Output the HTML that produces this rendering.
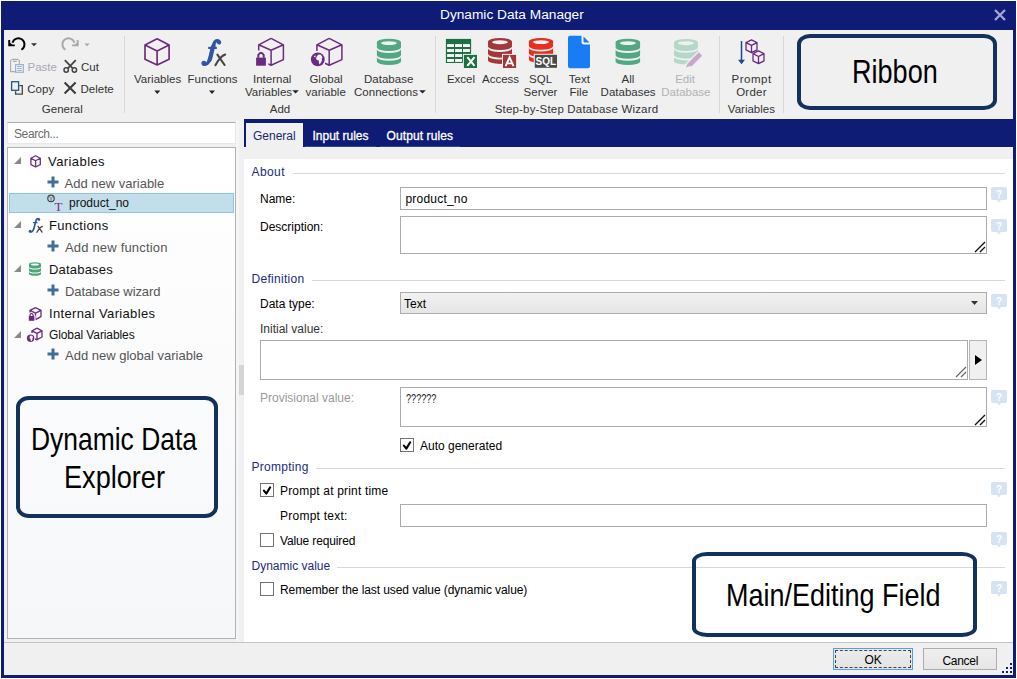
<!DOCTYPE html>
<html><head><meta charset="utf-8">
<style>
*{margin:0;padding:0;box-sizing:border-box}
html,body{width:1017px;height:679px;overflow:hidden;background:#fff;font-family:"Liberation Sans",sans-serif}
.a{position:absolute}
.t{position:absolute;white-space:pre;line-height:1;font-size:12px;color:#000}
.r{font-size:11.5px;color:#333}
.c{text-align:center}
.sec{color:#1c2a84}
.box{position:absolute;background:#fff;border:1px solid #ababab}
.sep{position:absolute;background:#dadada;width:1px}
.hl{position:absolute;height:1px;background:#d8d8d8}
.cb{position:absolute;width:14px;height:14px;border:1px solid #737373;background:#fff}
.help{position:absolute;width:16px;height:16px}
.ann{position:absolute;border:4px solid #12315d;border-radius:12px}
.annt{position:absolute;white-space:pre;line-height:1;color:#000;transform-origin:0 0}
</style></head><body>
<!-- window frame -->
<div class="a" style="left:1px;top:1px;width:1015px;height:677px;background:#0e1c75"></div>
<div class="a" style="left:4px;top:30px;width:1009px;height:645px;background:#f0f0f0"></div>
<div class="t" style="left:440px;top:8.4px;font-size:13.7px;color:#fff">Dynamic Data Manager</div>
<svg class="a" style="left:994px;top:9px" width="12" height="12" viewBox="0 0 12 12"><path d="M1 1L11 11M11 1L1 11" stroke="#a2a6d3" stroke-width="2.4"/></svg>

<!-- RIBBON -->
<div id="ribbon">
<svg class="a" style="left:0;top:30px" width="800" height="90" viewBox="0 30 800 90">
<path d="M12.5 42.8A6.1 6.1 0 1 1 21.45 49.7" stroke="#000" stroke-width="1.9" fill="none"/>
<path d="M9.2 39.9V45.4H14.8" stroke="#000" stroke-width="1.9" fill="none"/><path d="M9.3 42L9.3 45.3L12.8 45.3Z" fill="#000"/>
<path d="M31 43.3H37L34 46.3Z" fill="#333"/>
<path d="M74.4 42.8A6.1 6.1 0 1 0 65.45 49.7" stroke="#a8a8a8" stroke-width="1.9" fill="none"/>
<path d="M77.7 39.9V45.4H72.1" stroke="#a8a8a8" stroke-width="1.9" fill="none"/><path d="M77.6 42L77.6 45.3L74.1 45.3Z" fill="#a8a8a8"/>
<path d="M84.3 43.5H89.8L87 46.3Z" fill="#a8a8a8"/>
<path d="M12.3 59.4H17.8M12.2 59.6L10.6 60.6V71.6H15.2M17.8 59.6L19.4 60.6V64.2M13 61.4H16.8" stroke="#acacac" stroke-width="1.1" fill="none"/>
<rect x="15.6" y="64.6" width="7.8" height="7.7" fill="#f0f0f0" stroke="#9ab5d0" stroke-width="1.2"/><path d="M17.2 66.5H21.8M17.2 68.5H21.8M17.2 70.5H21.8" stroke="#9ab5d0" stroke-width="1"/>
<path d="M64.8 60.2L72.8 68.3M75.8 60.2L67.8 68.3" stroke="#444" stroke-width="1.8"/><circle cx="66.2" cy="70" r="2.2" stroke="#444" stroke-width="1.5" fill="none"/><circle cx="74.4" cy="70" r="2.2" stroke="#444" stroke-width="1.5" fill="none"/>
<rect x="11.6" y="81.7" width="7" height="8.6" fill="none" stroke="#1f5a8f" stroke-width="1.3"/><path d="M19.3 85.7H22.3V94.2H15.6V91.2" stroke="#444" stroke-width="1.3" fill="none"/>
<path d="M64.6 82.6L75.6 93.4M75.6 82.6L64.6 93.4" stroke="#3c3c3c" stroke-width="2.1"/>
<path d="M124.5 36V113" stroke="#d8d8d8" stroke-width="1"/>
<path d="M435.5 36V113" stroke="#d8d8d8" stroke-width="1"/>
<path d="M719.5 36V113" stroke="#d8d8d8" stroke-width="1"/>
<path d="M783.5 36V113" stroke="#d8d8d8" stroke-width="1"/>
<path d="M157.1 38.8L169.1 45.1V59.3L157.1 65L145 59.3V45.1Z M145 45.1L157.1 50.9L169.1 45.1 M157.1 50.9V65" stroke="#6b2a7e" stroke-width="1.65" fill="none" stroke-linejoin="round"/>
<path d="M154.3 90.6H160.3L157.3 94Z" fill="#222"/>
<g transform="translate(195 34)"><path d="M24.3 8.6C24 6.2 20.6 5.6 19.2 9.2L17.6 14C16 20 15.6 24.5 13.2 28.3C12 30.2 10.3 30.8 8.6 30" stroke="#2e56a4" stroke-width="3.2" fill="none" stroke-linecap="round"/><path d="M18.6 11.5L17.2 16C16.2 20 15.8 23 14.6 26" stroke="#2e56a4" stroke-width="4.2" fill="none" stroke-linecap="round"/><circle cx="24.1" cy="8.4" r="2.1" fill="#2e56a4"/><circle cx="8.9" cy="29.3" r="2.5" fill="#2e56a4"/><path d="M13.2 13.9H21.8" stroke="#2e56a4" stroke-width="2.2"/><path d="M20.4 31.2C23 26.5 26 22 30.2 20.6M22.4 20.6L29.6 31" stroke="#444" stroke-width="2.1" fill="none" stroke-linecap="round"/></g>
<path d="M209 90.6H215L212 94Z" fill="#222"/>
<path d="M271.1 38.4L283.4 44.8V59.6L271.1 65.3L267.5 63.6 M258.7 50.5V44.8L271.1 38.4 M258.7 44.8L271.1 50.2L283.4 44.8 M271.1 50.2V65.3" stroke="#6b2a7e" stroke-width="1.5" fill="none" stroke-linejoin="round"/>
<path d="M255.2 52V67.5H267.5V56.5" stroke="#f0f0f0" stroke-width="1.6" fill="none"/><rect x="256.1" y="57.6" width="9.8" height="8.1" fill="#6b2a7e"/><path d="M258.3 57.8V55Q261 50.3 263.7 55V57.8" stroke="#6b2a7e" stroke-width="2" fill="none"/>
<path d="M329.2 38.4L341.9 44.8V59.6L329.2 65.3L325 63.3 M316.9 51V44.8L329.2 38.4 M316.9 44.8L329.2 50.2L341.9 44.8 M329.2 50.2V65.3" stroke="#6b2a7e" stroke-width="1.5" fill="none" stroke-linejoin="round"/>
<circle cx="317.8" cy="59.4" r="8" fill="#f0f0f0"/><circle cx="317.8" cy="59.4" r="6.9" fill="#6b2a7e"/><path d="M318.5 54.5Q320.5 54 321.5 55.5L322.5 57.5Q321 58.5 322 60.5Q321 63 319.5 64.5Q318.5 62 318.8 60.5Q316.5 60.5 316 58.5Q316.5 56 318.5 54.5Z M313.8 56.5Q314.8 55.2 315.8 55.5L315.2 57.5Z" fill="#f0f0f0"/>
<path d="M376.9 42.336999999999996A12.05 3.537 0 0 1 401.0 42.336999999999996V47.577A12.05 3.537 0 0 1 376.9 47.577Z M376.9 49.411A12.05 3.537 0 0 0 401.0 49.411V55.148799999999994A12.05 3.537 0 0 1 376.9 55.148799999999994Z M376.9 57.14A12.05 3.537 0 0 0 401.0 57.14V61.463A12.05 3.537 0 0 1 376.9 61.463Z" fill="#52a883"/><ellipse cx="388.95" cy="43.123" rx="7.953000000000001" ry="1.9649999999999999" fill="#f0f0f0"/>
<path d="M292.3 90.2H298.8L295.55 93.6Z" fill="#222"/>
<path d="M419.2 90.2H425.8L422.5 93.6Z" fill="#222"/>
<rect x="445.9" y="38.9" width="25.2" height="24.1" fill="#1d7044"/>
<rect x="447.1" y="44.1" width="6.9" height="2.9" fill="#fff"/>
<rect x="455.1" y="44.1" width="6.9" height="2.9" fill="#fff"/>
<rect x="463" y="44.1" width="6.9" height="2.9" fill="#fff"/>
<rect x="447.1" y="49.1" width="6.9" height="2.9" fill="#fff"/>
<rect x="455.1" y="49.1" width="6.9" height="2.9" fill="#fff"/>
<rect x="463" y="49.1" width="6.9" height="2.9" fill="#fff"/>
<rect x="447.1" y="54.1" width="6.9" height="2.9" fill="#fff"/>
<rect x="455.1" y="54.1" width="6.9" height="2.9" fill="#fff"/>
<rect x="463" y="54.1" width="6.9" height="2.9" fill="#fff"/>
<rect x="447.1" y="59" width="6.9" height="2.9" fill="#fff"/>
<rect x="455.1" y="59" width="6.9" height="2.9" fill="#fff"/>
<rect x="463" y="59" width="6.9" height="2.9" fill="#fff"/>
<rect x="462.9" y="53.9" width="15.1" height="15.1" fill="#f0f0f0"/><rect x="463.9" y="54.9" width="13.1" height="13.1" fill="#1d7044"/>
<path d="M467.3 57.2L474.5 65.8M474.5 57.2L467.3 65.8" stroke="#fff" stroke-width="2"/>
<path d="M488 41.41A12.0 3.5100000000000002 0 0 1 512 41.41V46.61A12.0 3.5100000000000002 0 0 1 488 46.61Z M488 48.43A12.0 3.5100000000000002 0 0 0 512 48.43V54.123999999999995A12.0 3.5100000000000002 0 0 1 488 54.123999999999995Z M488 56.099999999999994A12.0 3.5100000000000002 0 0 0 512 56.099999999999994V60.39A12.0 3.5100000000000002 0 0 1 488 60.39Z" fill="#a4373a"/><ellipse cx="500.0" cy="42.19" rx="7.92" ry="1.95" fill="#f0f0f0"/>
<rect x="502" y="53.9" width="15.1" height="15.1" fill="#f0f0f0"/><rect x="503" y="54.9" width="13.1" height="13.1" fill="#a4373a"/>
<path d="M505.6 66.2L509.55 57.3L513.5 66.2M507.2 63.4H511.9" stroke="#fff" stroke-width="1.9" fill="none"/>
<path d="M528.9 41.302A12.1 3.402 0 0 1 553.1 41.302V46.342A12.1 3.402 0 0 1 528.9 46.342Z M528.9 48.105999999999995A12.1 3.402 0 0 0 553.1 48.105999999999995V53.6248A12.1 3.402 0 0 1 528.9 53.6248Z M528.9 55.53999999999999A12.1 3.402 0 0 0 553.1 55.53999999999999V59.69799999999999A12.1 3.402 0 0 1 528.9 59.69799999999999Z" fill="#e5301f"/><ellipse cx="541.0" cy="42.058" rx="7.986" ry="1.89" fill="#f0f0f0"/>
<rect x="533.8" y="53.8" width="24.2" height="15" fill="#f0f0f0"/><rect x="534.8" y="54.8" width="22.2" height="13" fill="#4a4a4a"/>
<text x="545.9" y="65.2" font-family="Liberation Sans" font-weight="bold" font-size="10" fill="#fff" text-anchor="middle">SQL</text>
<path d="M570 35.8H581.5V42Q581.5 44.5 584 44.5H590V66.2Q590 68.2 588 68.2H570Q568 68.2 568 66.2V37.8Q568 35.8 570 35.8Z" fill="#1a7cf5"/><path d="M583.5 36.5L589.5 42.5H584.5Q583.5 42.5 583.5 41.5Z" fill="#1a7cf5"/>
<path d="M615.6 42.336999999999996A12.25 3.537 0 0 1 640.1 42.336999999999996V47.577A12.25 3.537 0 0 1 615.6 47.577Z M615.6 49.411A12.25 3.537 0 0 0 640.1 49.411V55.148799999999994A12.25 3.537 0 0 1 615.6 55.148799999999994Z M615.6 57.14A12.25 3.537 0 0 0 640.1 57.14V61.463A12.25 3.537 0 0 1 615.6 61.463Z" fill="#52a883"/><ellipse cx="627.85" cy="43.123" rx="8.085" ry="1.9649999999999999" fill="#f0f0f0"/>
<path d="M674 42.456A11.95 3.4560000000000004 0 0 1 697.9 42.456V47.576A11.95 3.4560000000000004 0 0 1 674 47.576Z M674 49.368A11.95 3.4560000000000004 0 0 0 697.9 49.368V54.9744A11.95 3.4560000000000004 0 0 1 674 54.9744Z M674 56.92A11.95 3.4560000000000004 0 0 0 697.9 56.92V61.14399999999999A11.95 3.4560000000000004 0 0 1 674 61.14399999999999Z" fill="#b4d8c7"/><ellipse cx="685.95" cy="43.224000000000004" rx="7.887" ry="1.92" fill="#f0f0f0"/>
<path d="M688.5 66L700.5 54" stroke="#f0f0f0" stroke-width="7.5" stroke-linecap="round"/><path d="M689.5 65L700.5 54" stroke="#c8a7cb" stroke-width="4.6"/><path d="M686 67.6L687.8 62.8L690.8 65.8Z" fill="#c8a7cb"/>
<path d="M741.5 41V61" stroke="#1b4a8c" stroke-width="1.5"/><path d="M738 59.8H745L741.5 64.2Z" fill="#1b4a8c"/>
<path d="M751.5 39.8L757 42.6V49.8L751.5 52.6L746 49.8V42.6Z M746 42.6L751.5 45.4L757 42.6 M751.5 45.4V52.6" stroke="#6b2a7e" stroke-width="1.3" fill="none" stroke-linejoin="round"/>
<path d="M758.5 50.9L764 53.7V60.9L758.5 63.7L753 60.9V53.7Z M753 53.7L758.5 56.5L764 53.7 M758.5 56.5V63.7" stroke="#6b2a7e" stroke-width="1.3" fill="none" stroke-linejoin="round"/>
</svg>
<div class="t r" style="left:27.5px;top:62.27px;font-size:11.5px;color:#a6aab3;">Paste</div>
<div class="t r" style="left:81px;top:62.27px;font-size:11.5px;color:#333;">Cut</div>
<div class="t r" style="left:27.3px;top:83.77px;font-size:11.5px;color:#333;">Copy</div>
<div class="t r" style="left:80.5px;top:83.77px;font-size:11.5px;color:#333;">Delete</div>
<div class="t r c" style="left:-57.7px;width:240px;top:104.27px;font-size:11.5px;color:#333;">General</div>
<div class="t r c" style="left:37.599999999999994px;width:240px;top:74.27px;font-size:11.5px;color:#333;">Variables</div>
<div class="t r c" style="left:92.5px;width:240px;top:74.27px;font-size:11.5px;color:#333;">Functions</div>
<div class="t r c" style="left:152.2px;width:240px;top:74.27px;font-size:11.5px;color:#333;">Internal</div>
<div class="t r c" style="left:148.5px;width:240px;top:87.27px;font-size:11.5px;color:#333;">Variables</div>
<div class="t r c" style="left:160px;width:240px;top:104.27px;font-size:11.5px;color:#333;">Add</div>
<div class="t r c" style="left:206px;width:240px;top:74.27px;font-size:11.5px;color:#333;">Global</div>
<div class="t r c" style="left:205.7px;width:240px;top:87.27px;font-size:11.5px;color:#333;">variable</div>
<div class="t r c" style="left:268.7px;width:240px;top:74.27px;font-size:11.5px;color:#333;">Database</div>
<div class="t r c" style="left:266px;width:240px;top:87.27px;font-size:11.5px;color:#333;">Connections</div>
<div class="t r c" style="left:341px;width:240px;top:74.27px;font-size:11.5px;color:#333;">Excel</div>
<div class="t r c" style="left:380.6px;width:240px;top:74.27px;font-size:11.5px;color:#333;">Access</div>
<div class="t r c" style="left:420.6px;width:240px;top:74.27px;font-size:11.5px;color:#333;">SQL</div>
<div class="t r c" style="left:420.5px;width:240px;top:87.27px;font-size:11.5px;color:#333;">Server</div>
<div class="t r c" style="left:459.4px;width:240px;top:74.27px;font-size:11.5px;color:#333;">Text</div>
<div class="t r c" style="left:458.79999999999995px;width:240px;top:87.27px;font-size:11.5px;color:#333;">File</div>
<div class="t r c" style="left:507.9px;width:240px;top:74.27px;font-size:11.5px;color:#333;">All</div>
<div class="t r c" style="left:508.1px;width:240px;top:87.27px;font-size:11.5px;color:#333;">Databases</div>
<div class="t r c" style="left:565.1px;width:240px;top:74.27px;font-size:11.5px;color:#b3b3b3;">Edit</div>
<div class="t r c" style="left:565.9px;width:240px;top:87.27px;font-size:11.5px;color:#b3b3b3;">Database</div>
<div class="t r c" style="left:456.5px;width:240px;top:104.27px;font-size:11.5px;color:#333;letter-spacing:0.18px">Step-by-Step Database Wizard</div>
<div class="t r c" style="left:631.6px;width:240px;top:74.27px;font-size:11.5px;color:#333;letter-spacing:0.5px">Prompt</div>
<div class="t r c" style="left:631.5px;width:240px;top:87.27px;font-size:11.5px;color:#333;letter-spacing:0.25px">Order</div>
<div class="t r c" style="left:631.4px;width:240px;top:104.27px;font-size:11.5px;color:#333;">Variables</div>
<div class="ann" style="left:797px;top:34px;width:200px;height:76px;border-width:4px;border-radius:13px/10px"></div>
<div class="annt" style="left:852px;top:55.2px;font-size:33px;transform:scaleX(0.82)">Ribbon</div></div><!--/ribbon-->

<!-- LEFT PANEL -->
<div class="a" style="left:7px;top:122px;width:229px;height:22px;background:#fff;border:1px solid #e3e9ef;border-top-color:#abadb3"></div>
<div class="t" style="left:14px;top:127.5px;color:#6d6d6d;letter-spacing:-0.4px">Search...</div>
<div class="a" style="left:7px;top:147px;width:229px;height:492px;border:1px solid #b2b2b2;background:linear-gradient(#fff,#f6f7f9)"></div>
<div id="tree">
<div class="a" style="left:9px;top:193px;width:225px;height:20px;background:#c2deea;border:1px solid #8cc5e6"></div>
<!-- triangles -->
<svg class="a" style="left:14px;top:157px" width="8" height="8" viewBox="0 0 8 8"><path d="M7 0V7H0Z" fill="#8a8a8a"/></svg>
<svg class="a" style="left:14px;top:221px" width="8" height="8" viewBox="0 0 8 8"><path d="M7 0V7H0Z" fill="#8a8a8a"/></svg>
<svg class="a" style="left:14px;top:265px" width="8" height="8" viewBox="0 0 8 8"><path d="M7 0V7H0Z" fill="#8a8a8a"/></svg>
<svg class="a" style="left:14px;top:331px" width="8" height="8" viewBox="0 0 8 8"><path d="M7 0V7H0Z" fill="#8a8a8a"/></svg>
<!-- cube icon -->
<svg class="a" style="left:0;top:0" width="50" height="180" viewBox="0 0 50 180"><path d="M35.6 155.7L40.3 158.2V164.6L35.6 167L30.9 164.6V158.2Z M30.9 158.2L35.6 160.7L40.3 158.2 M35.6 160.7V167" stroke="#6d2e82" stroke-width="1.3" fill="none" stroke-linejoin="round"/></svg>
<div class="t" style="left:48px;top:155px;font-size:13px;color:#111;letter-spacing:0.42px">Variables</div>
<svg class="a" style="left:47px;top:176px" width="12" height="12" viewBox="0 0 12 12"><path d="M6 0.5V11.5M0.5 6H11.5" stroke="#406e9a" stroke-width="3"/></svg>
<div class="t" style="left:64.5px;top:176.5px;font-size:13px;color:#555">Add new variable</div>
<!-- product_no icon -->
<svg class="a" style="left:0;top:0" width="70" height="220" viewBox="0 0 70 220"><circle cx="51" cy="198.4" r="3.2" stroke="#444" stroke-width="1.2" fill="none"/><path d="M48.9 196.3L51 198.6L53.1 196.3M51 198.6V201.5" stroke="#666" stroke-width="0.9" fill="none"/><text x="58.5" y="210.8" font-family="Liberation Serif" font-size="13" fill="#8b1a8b" text-anchor="middle">T</text></svg>
<div class="t" style="left:69px;top:197.3px;color:#111">product_no</div>
<!-- fx -->
<svg class="a" style="left:0;top:0" width="60" height="240" viewBox="0 0 60 240"><g transform="translate(25.6 214.9) scale(0.555)"><path d="M24.3 8.6C24 6.2 20.6 5.6 19.2 9.2L17.6 14C16 20 15.6 24.5 13.2 28.3C12 30.2 10.3 30.8 8.6 30" stroke="#2e56a4" stroke-width="3.1" fill="none" stroke-linecap="round"/><circle cx="24" cy="8.3" r="2.3" fill="#2e56a4"/><circle cx="8.3" cy="29.4" r="2.7" fill="#2e56a4"/><path d="M13.2 13.9H21.5" stroke="#2e56a4" stroke-width="2.2"/><path d="M20.4 31.2C23 26.5 26 22 30.2 20.6M22.4 20.6L29.6 31" stroke="#444" stroke-width="2.3" fill="none" stroke-linecap="round"/></g></svg>
<div class="t" style="left:49px;top:219px;font-size:13px;color:#111;letter-spacing:0.35px">Functions</div>
<svg class="a" style="left:47px;top:240px" width="12" height="12" viewBox="0 0 12 12"><path d="M6 0.5V11.5M0.5 6H11.5" stroke="#406e9a" stroke-width="3"/></svg>
<div class="t" style="left:65px;top:241px;font-size:13px;color:#555;letter-spacing:0.18px">Add new function</div>
<!-- db -->
<svg class="a" style="left:0;top:0" width="60" height="300" viewBox="0 0 60 300"><path d="M29 264.10900000000004A6.0 1.8090000000000002 0 0 1 41 264.10900000000004V266.789A6.0 1.8090000000000002 0 0 1 29 266.789Z M29 267.72700000000003A6.0 1.8090000000000002 0 0 0 41 267.72700000000003V270.6616A6.0 1.8090000000000002 0 0 1 29 270.6616Z M29 271.68A6.0 1.8090000000000002 0 0 0 41 271.68V273.89099999999996A6.0 1.8090000000000002 0 0 1 29 273.89099999999996Z" fill="#4ea57a"/><ellipse cx="35.0" cy="264.511" rx="3.96" ry="1.005" fill="#fff"/></svg>
<div class="t" style="left:49px;top:262.8px;font-size:13px;color:#111;letter-spacing:0.2px">Databases</div>
<svg class="a" style="left:47px;top:284px" width="12" height="12" viewBox="0 0 12 12"><path d="M6 0.5V11.5M0.5 6H11.5" stroke="#406e9a" stroke-width="3"/></svg>
<div class="t" style="left:65px;top:284.7px;font-size:13px;color:#555;letter-spacing:-0.1px">Database wizard</div>
<!-- internal vars -->
<svg class="a" style="left:0;top:0" width="60" height="360" viewBox="0 0 60 360"><path d="M35.5 307.6L41 310.4V316.6L35.5 319.6L34.5 319.1 M30 312.5V310.4L35.5 307.6 M30 310.4L35.5 313.2L41 310.4 M35.5 313.2V319.6" stroke="#6b2a7e" stroke-width="1.3" fill="none" stroke-linejoin="round"/><path d="M28 312.5V322H35V315.5" stroke="#fff" stroke-width="1.2" fill="none"/><rect x="28.8" y="316" width="5.5" height="4.8" fill="#6b2a7e"/><path d="M30 316.2V314.8Q31.55 312 33.1 314.8V316.2" stroke="#6b2a7e" stroke-width="1.2" fill="none"/></svg>
<div class="t" style="left:49px;top:306.5px;font-size:13px;color:#111;letter-spacing:0.34px">Internal Variables</div>
<!-- global vars -->
<svg class="a" style="left:0;top:0" width="60" height="360" viewBox="0 0 60 360"><path d="M37 328.2L42 330.8V337L37 339.8L34.5 338.6 M32 333V330.8L37 328.2 M32 330.8L37 333.4L42 330.8 M37 333.4V339.8" stroke="#6b2a7e" stroke-width="1.3" fill="none" stroke-linejoin="round"/><circle cx="30.6" cy="338.3" r="4.6" fill="#fff"/><circle cx="30.6" cy="338.3" r="3.7" fill="#6b2a7e"/><path d="M31 335.5Q32.5 335.6 33 337Q32 338 32.5 339.5Q31.5 341 31 341.5Q30.5 340 30.6 339Q29.3 338.5 29.5 337Q30 335.8 31 335.5Z" fill="#fff"/></svg>
<div class="t" style="left:49px;top:328.6px;color:#111;letter-spacing:-0.1px">Global Variables</div>
<svg class="a" style="left:47px;top:348px" width="12" height="12" viewBox="0 0 12 12"><path d="M6 0.5V11.5M0.5 6H11.5" stroke="#406e9a" stroke-width="3"/></svg>
<div class="t" style="left:65px;top:349px;font-size:13px;color:#555">Add new global variable</div>
</div>
<div class="a" style="left:236px;top:119px;width:3px;height:523px;background:#f5f5f5"></div>
<div class="a" style="left:239px;top:365px;width:5px;height:30px;background:#d4d4d4"></div>

<!-- MAIN PANEL -->
<div class="a" style="left:244px;top:119px;width:769px;height:28px;background:#0e1c75"></div>
<div class="a" style="left:246px;top:123px;width:57px;height:24px;background:#f0f0f0"></div>
<div class="a" style="left:244px;top:159px;width:769px;height:483px;background:#fff"></div>
<div id="form">
<!-- tabs text -->
<div class="t" style="left:253px;top:130.3px;color:#1b2870">General</div>
<div class="t" style="left:312.5px;top:130.3px;color:#fff;-webkit-text-stroke:0.3px #fff">Input rules</div>
<div class="t" style="left:386.5px;top:130.3px;color:#fff;-webkit-text-stroke:0.3px #fff;letter-spacing:0.1px">Output rules</div>
<div class="a" style="left:305px;top:146px;width:71px;height:1px;background:#34449a"></div>
<div class="a" style="left:380px;top:146px;width:80px;height:1px;background:#34449a"></div>
<!-- sections -->
<div class="t sec" style="left:251.5px;top:165.8px;letter-spacing:0.4px">About</div>
<div class="hl" style="left:293px;top:173px;width:712px"></div>
<div class="t" style="left:260px;top:192.8px">Name:</div>
<div class="box" style="left:400px;top:187px;width:587px;height:23px"></div>
<div class="t" style="left:405.5px;top:192.8px;letter-spacing:0.2px">product_no</div>
<div class="t" style="left:260px;top:220.8px">Description:</div>
<div class="box" style="left:400px;top:216px;width:587px;height:38px"></div>
<svg class="a" style="left:974px;top:241px" width="12" height="12" viewBox="0 0 12 12"><path d="M1 11L11 1M6 11L11 6" stroke="#111" stroke-width="1.4"/></svg>

<div class="t sec" style="left:251.5px;top:273px;letter-spacing:0.3px">Definition</div>
<div class="hl" style="left:312px;top:280px;width:693px"></div>
<div class="t" style="left:260px;top:297.8px">Data type:</div>
<div class="box" style="left:400px;top:292px;width:587px;height:22px;background:linear-gradient(#f2f2f2,#e5e5e5);border-color:#acacac"></div>
<div class="t" style="left:404px;top:297.8px">Text</div>
<svg class="a" style="left:971px;top:301px" width="7" height="4" viewBox="0 0 7 4"><path d="M0 0H7L3.5 4Z" fill="#333"/></svg>
<div class="t" style="left:260px;top:322.6px;color:#333">Initial value:</div>
<div class="box" style="left:260px;top:340px;width:708px;height:40px"></div>
<svg class="a" style="left:955px;top:366px" width="12" height="12" viewBox="0 0 12 12"><path d="M1 11L11 1M6 11L11 6" stroke="#666" stroke-width="1.2"/></svg>
<div class="box" style="left:969px;top:340px;width:18px;height:40px;background:#f0f0f0;border-color:#b5b5b5"></div>
<svg class="a" style="left:975px;top:355px" width="7" height="10" viewBox="0 0 7 10"><path d="M0 0V10L7 5Z" fill="#000"/></svg>
<div class="t" style="left:260px;top:392px;color:#9a9a9a">Provisional value:</div>
<div class="box" style="left:400px;top:387px;width:587px;height:40px"></div>
<div class="t" style="left:405.5px;top:393.3px;font-size:12px;color:#222;transform:scaleX(0.76);transform-origin:0 0">??????</div>
<svg class="a" style="left:974px;top:414px" width="12" height="12" viewBox="0 0 12 12"><path d="M1 11L11 1M6 11L11 6" stroke="#111" stroke-width="1.4"/></svg>
<div class="cb" style="left:400px;top:438px"></div>
<svg class="a" style="left:400px;top:438px" width="14" height="14" viewBox="0 0 14 14"><path d="M3.9 7.6L6.3 10.6L10.2 4.3" stroke="#000" stroke-width="2.1" fill="none" stroke-linecap="round" stroke-linejoin="round"/></svg>
<div class="t" style="left:420px;top:439.8px">Auto generated</div>

<div class="t sec" style="left:251.5px;top:461.2px;letter-spacing:0.28px">Prompting</div>
<div class="hl" style="left:316px;top:468px;width:689px"></div>
<div class="cb" style="left:260px;top:483px"></div>
<svg class="a" style="left:260px;top:483px" width="14" height="14" viewBox="0 0 14 14"><path d="M3.9 7.6L6.3 10.6L10.2 4.3" stroke="#000" stroke-width="2.1" fill="none" stroke-linecap="round" stroke-linejoin="round"/></svg>
<div class="t" style="left:280px;top:485.2px;letter-spacing:0.18px">Prompt at print time</div>
<div class="t" style="left:280px;top:510.3px;letter-spacing:0.25px">Prompt text:</div>
<div class="box" style="left:400px;top:504px;width:587px;height:23px"></div>
<div class="cb" style="left:260px;top:533px"></div>
<div class="t" style="left:280px;top:534.8px;letter-spacing:-0.14px">Value required</div>

<div class="t sec" style="left:251.5px;top:559.9px">Dynamic value</div>
<div class="hl" style="left:337px;top:567px;width:668px"></div>
<div class="cb" style="left:260px;top:582px"></div>
<div class="t" style="left:280px;top:583.6px;letter-spacing:-0.08px">Remember the last used value (dynamic value)</div>
<svg class="a" style="left:991px;top:187px" width="16" height="16" viewBox="0 0 16 16"><path d="M2 0H14Q16 0 16 2V11Q16 13 14 13H10L8 15.5L6 13H2Q0 13 0 11V2Q0 0 2 0Z" fill="#d5e3f5"/><text x="8" y="10.5" font-size="10" font-weight="bold" fill="#fff" text-anchor="middle" font-family="Liberation Sans">?</text></svg>
<svg class="a" style="left:991px;top:219px" width="16" height="16" viewBox="0 0 16 16"><path d="M2 0H14Q16 0 16 2V11Q16 13 14 13H10L8 15.5L6 13H2Q0 13 0 11V2Q0 0 2 0Z" fill="#d5e3f5"/><text x="8" y="10.5" font-size="10" font-weight="bold" fill="#fff" text-anchor="middle" font-family="Liberation Sans">?</text></svg>
<svg class="a" style="left:991px;top:294px" width="16" height="16" viewBox="0 0 16 16"><path d="M2 0H14Q16 0 16 2V11Q16 13 14 13H10L8 15.5L6 13H2Q0 13 0 11V2Q0 0 2 0Z" fill="#d5e3f5"/><text x="8" y="10.5" font-size="10" font-weight="bold" fill="#fff" text-anchor="middle" font-family="Liberation Sans">?</text></svg>
<svg class="a" style="left:991px;top:390px" width="16" height="16" viewBox="0 0 16 16"><path d="M2 0H14Q16 0 16 2V11Q16 13 14 13H10L8 15.5L6 13H2Q0 13 0 11V2Q0 0 2 0Z" fill="#d5e3f5"/><text x="8" y="10.5" font-size="10" font-weight="bold" fill="#fff" text-anchor="middle" font-family="Liberation Sans">?</text></svg>
<svg class="a" style="left:991px;top:482px" width="16" height="16" viewBox="0 0 16 16"><path d="M2 0H14Q16 0 16 2V11Q16 13 14 13H10L8 15.5L6 13H2Q0 13 0 11V2Q0 0 2 0Z" fill="#d5e3f5"/><text x="8" y="10.5" font-size="10" font-weight="bold" fill="#fff" text-anchor="middle" font-family="Liberation Sans">?</text></svg>
<svg class="a" style="left:991px;top:532px" width="16" height="16" viewBox="0 0 16 16"><path d="M2 0H14Q16 0 16 2V11Q16 13 14 13H10L8 15.5L6 13H2Q0 13 0 11V2Q0 0 2 0Z" fill="#d5e3f5"/><text x="8" y="10.5" font-size="10" font-weight="bold" fill="#fff" text-anchor="middle" font-family="Liberation Sans">?</text></svg>
<svg class="a" style="left:991px;top:581px" width="16" height="16" viewBox="0 0 16 16"><path d="M2 0H14Q16 0 16 2V11Q16 13 14 13H10L8 15.5L6 13H2Q0 13 0 11V2Q0 0 2 0Z" fill="#d5e3f5"/><text x="8" y="10.5" font-size="10" font-weight="bold" fill="#fff" text-anchor="middle" font-family="Liberation Sans">?</text></svg>
</div>

<!-- STATUS BAR -->
<div class="ann" style="left:16px;top:396px;width:202px;height:122px;border-width:4px;border-radius:13px/11px"></div>
<div class="annt" style="left:31px;top:423.3px;font-size:32px;transform:scaleX(0.826)">Dynamic Data</div>
<div class="annt" style="left:64px;top:461.3px;font-size:32px;transform:scaleX(0.847)">Explorer</div>
<div class="ann" style="left:692px;top:552px;width:285px;height:85px;border-width:4px;border-radius:15px/9px"></div>
<div class="annt" style="left:725.5px;top:579.2px;font-size:32px;transform:scaleX(0.843)">Main/Editing Field</div>
<div class="a" style="left:833px;top:648px;width:80px;height:22px;border:1px solid #569de5;background:linear-gradient(#ececec,#e3e3e3)"></div>
<div class="a" style="left:835px;top:650px;width:76px;height:18px;border:1px dashed #444"></div>
<div class="t" style="left:864.5px;top:654px;color:#000">OK</div>
<div class="a" style="left:923px;top:648px;width:74px;height:22px;border:1px solid #adadad;background:linear-gradient(#efefef,#e5e5e5)"></div>
<div class="t" style="left:942.5px;top:654.6px;color:#000;letter-spacing:-0.3px">Cancel</div>
<svg class="a" style="left:1000px;top:661px" width="13" height="13" viewBox="0 0 13 13"><g fill="#0e1c75"><rect x="10" y="2" width="2" height="2"/><rect x="6" y="6" width="2" height="2"/><rect x="10" y="6" width="2" height="2"/><rect x="2" y="10" width="2" height="2"/><rect x="6" y="10" width="2" height="2"/><rect x="10" y="10" width="2" height="2"/></g></svg>

<div class="a" style="left:4px;top:642px;width:1009px;height:1px;background:#c4c4c4"></div>
</body></html>
